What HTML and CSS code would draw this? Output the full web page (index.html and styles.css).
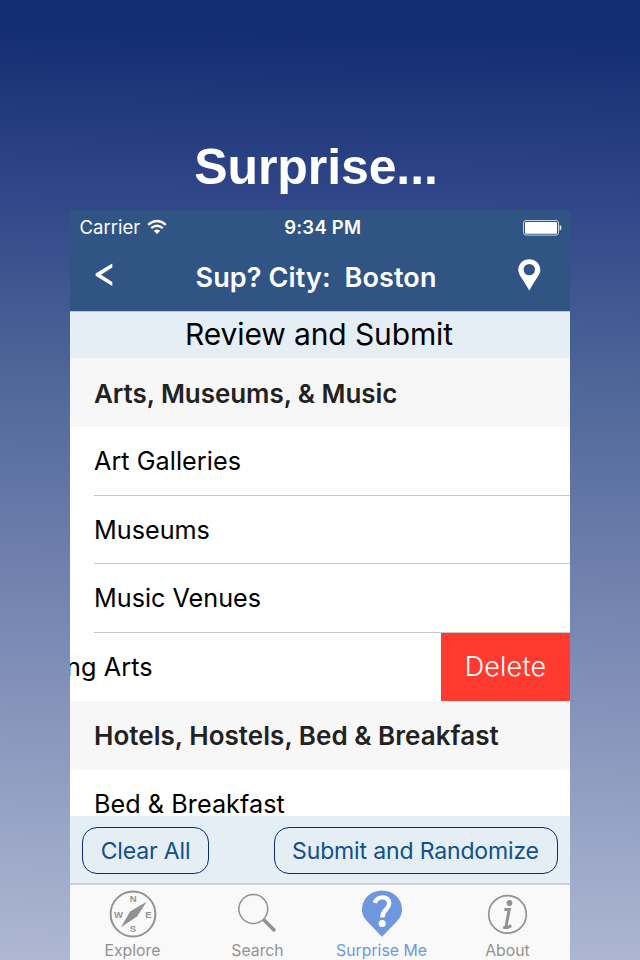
FILE: index.html
```html
<!DOCTYPE html>
<html lang="en">
<head>
<meta charset="utf-8">
<title>Surprise...</title>
<link rel="stylesheet" href="styles.css">
</head>
<body>
<h1 class="headline">Surprise...</h1>
<main class="phone">
  <div class="status">
    <div class="carrier"><span class="carrier-name">Carrier</span>
      <svg class="wifi" width="20" height="16" viewBox="0 0 20 16" fill="none" stroke="#fff" stroke-width="2.3"><path d="M1.2 5.8Q10-1.8 18.8 5.8M4.2 9.2Q10 4.3 15.8 9.2"/><path d="M6.8 11.8Q10 9 13.2 11.8L10 15Z" fill="#fff" stroke="none"/></svg>
    </div>
    <span class="time">9:34 PM</span>
    <svg class="battery" width="39" height="16" viewBox="0 0 39 16"><rect x=".5" y=".5" width="35" height="14.6" rx="2.5" fill="none" stroke="#c5d1df"/><rect x="2" y="2" width="32" height="11.7" rx="1" fill="#fff"/><path d="M36.7 5Q38.5 5.5 38.5 7.8T36.7 10.6Z" fill="#fff"/></svg>
  </div>
  <nav class="navbar">
    <svg class="back" width="18" height="24" viewBox="0 0 18 24"><path d="M17.300.5V4.600L6 11.700 17.300 18.900V23L.6 12.700V10.600Z" fill="#fff"/></svg>
    <span class="nav-title">Sup? City:&nbsp; Boston</span>
    <svg class="pin" width="23" height="32" viewBox="0 0 23 32"><path fill="#fff" fill-rule="evenodd" d="M11.300.3C5 .3.3 5 .3 11c0 4.500 3.300 7 11 20.500C18.800 18 22.300 15.500 22.300 11 22.300 5 17.500.3 11.300.3ZM11.300 4.900a5.700 5.700 0 1 1 0 11.400 5.700 5.700 0 0 1 0-11.400Z"/></svg>
  </nav>
  <div class="review"><span>Review and Submit</span></div>
  <div class="list">
    <h2 class="section"><span class="s1">Arts, Museums, &amp; Music</span></h2>
    <div class="row"><span class="r1">Art Galleries</span></div>
    <div class="row"><span class="r2">Museums</span></div>
    <div class="row"><span class="r3">Music Venues</span></div>
    <div class="row swiped"><span class="slid">ng Arts</span><button class="delete"><span>Delete</span></button></div>
    <h2 class="section second"><span class="s2">Hotels, Hostels, Bed &amp; Breakfast</span></h2>
    <div class="row last"><span class="r4">Bed &amp; Breakfast</span></div>
  </div>
  <div class="toolbar">
    <button class="pill clear"><span>Clear All</span></button>
    <button class="pill submit"><span>Submit and Randomize</span></button>
  </div>
  <div class="tabs">
    <div class="tab">
      <svg width="48" height="48" viewBox="0 0 48 48"><circle cx="24" cy="24" r="22.400" fill="none" stroke="#929292" stroke-width="2"/><path d="M37.600 11.700 28 26.500 12 37.200 21 21.500Z" fill="#929292"/><g class="compass"><text x="24.300" y="12">N</text><text x="39.500" y="27.500">E</text><text x="24" y="42.200">S</text><text x="9.500" y="27.500">W</text></g></svg>
      <span class="t1">Explore</span>
    </div>
    <div class="tab">
      <svg width="48" height="48" viewBox="0 0 48 48" fill="none" stroke="#929292"><circle cx="19.300" cy="19" r="14.400" stroke-width="1.500"/><path d="M29.500 29.600 41 41" stroke-width="3.500"/></svg>
      <span class="t2">Search</span>
    </div>
    <div class="tab active">
      <svg width="48" height="48" viewBox="0 0 48 48"><path d="M24 .5C12.500.5 4 9 4 19.200c0 5.500 2 8.500 5.500 12.500L24 46.800 38.500 31.700C42 27.700 44 24.700 44 19.200 44 9 35.500.5 24 .5Z" fill="#6e97df"/><path d="M16.800 12.800C19 5.500 31.500 5.500 31.200 13.500 31 19.500 24.300 20 24.300 27.500" fill="none" stroke="#fff" stroke-width="4.400"/><circle cx="24.200" cy="33.500" r="3.500" fill="#fff"/></svg>
      <span class="t3">Surprise Me</span>
    </div>
    <div class="tab">
      <svg width="48" height="48" viewBox="0 0 48 48"><circle cx="23.500" cy="24.400" r="18.800" fill="none" stroke="#929292" stroke-width="1.700"/><circle cx="25.500" cy="13" r="2.900" fill="#929292"/><path d="M20.300 19.500H25.200L22.400 34.500C22 37.800 24 37.600 27.300 35.500M19.300 37.400H24.500" fill="none" stroke="#929292" stroke-width="3"/></svg>
      <span class="t4">About</span>
    </div>
  </div>
</main>
</body>
</html>
```
FILE: styles.css
```css
* { box-sizing: border-box; }
body {
  margin: 0;
  width: 640px;
  height: 960px;
  overflow: hidden;
  display: flex;
  flex-direction: column;
  align-items: center;
  font-family: Inter, "Liberation Sans", sans-serif;
  background: linear-gradient(181deg, #132d72 0, #132d72 35px, #32488a 215px, #4f6799 390px, #7282af 590px, #adb7d2 965px);
}
button { font: inherit; border: 0; padding: 0; margin: 0; }
span { white-space: nowrap; }
.headline {
  margin: 0;
  height: 210px;
  padding: 138px 8px 0 0;
  font: bold 50px/58px "Liberation Sans", Arial, sans-serif;
  letter-spacing: -.1px;
  color: #fff;
}
.phone { width: 500px; height: 750px; display: flex; flex-direction: column; background: #fff; overflow: hidden; }
.status {
  height: 35px;
  display: grid;
  grid-template-columns: 1fr auto 1fr;
  align-items: center;
  padding: 0 8px 0 9.500px;
  background: #305584;
  color: #fff;
  font-size: 18.500px;
}
.carrier { display: flex; align-items: center; gap: 8px; }
.carrier-name { padding-bottom: 1px; }
.wifi { margin: -2px 0 0 -1px; }
.time { font-weight: 600; font-size: 18.500px; letter-spacing: .25px; padding: 0 0 2px 4px; }
.battery { justify-self: end; }
.navbar {
  height: 66px;
  padding: 0 29px 0 25px;
  display: flex;
  justify-content: space-between;
  background: #305584;
  color: #fff;
}
.back { margin-top: 18px; }
.nav-title { font-size: 27px; font-weight: 600; line-height: 65px; letter-spacing: .12px; padding-left: 1px; }
.pin { margin-top: 14px; }
.review {
  height: 47px;
  border-top: 1px solid #b8c3d0;
  background: #e5edf5;
  text-align: center;
  font-size: 30px;
  letter-spacing: -.12px;
  line-height: 45px;
  padding-right: 2px;
}
.list { height: 458px; overflow: hidden; }
.section { margin: 0; height: 69px; padding-left: 24px; background: #f7f7f7; color: #222; font-size: 26px; font-weight: 600; line-height: 71px; }
.second { line-height: 70px; }
.s1 { letter-spacing: -.06px; }
.s2 { letter-spacing: .04px; }
.row { height: 68.600px; padding-left: 24px; font-size: 25.200px; line-height: 68px; }
.row:not(.swiped):not(.last) { background: linear-gradient(#c8c7cc, #c8c7cc) 24px 100% / 476px 1px no-repeat; }
.r1, .r4 { letter-spacing: .05px; }
.swiped { display: flex; justify-content: space-between; padding: 0; }
.slid { margin-left: -4px; letter-spacing: .1px; }
.delete { width: 129px; background: #ff3b30; color: #fff; font-size: 27px; font-weight: 300; letter-spacing: .2px; }
.toolbar {
  height: 67px;
  padding: 11px 12.500px 9px 12px;
  display: flex;
  justify-content: space-between;
  background: #e5edf5;
}
.pill { height: 47px; border: 1.500px solid #0b2f70; border-radius: 15px; background: none; color: #10508c; font-size: 23px; letter-spacing: -.15px; }
.clear { width: 127px; }
.submit { width: 284px; }
.tabs {
  height: 77px;
  border-top: 2px solid #cdd2d8;
  background: #f9f9f9;
  display: flex;
  color: #929292;
}
.tab { width: 125px; display: flex; flex-direction: column; align-items: center; padding-top: 5px; font-size: 15.800px; line-height: 25px; }
.tab svg { display: block; flex: none; }
.active { color: #6e97df; padding-right: 2px; }
.compass { font: bold 9.500px "Liberation Sans", sans-serif; fill: #929292; text-anchor: middle; }
```
